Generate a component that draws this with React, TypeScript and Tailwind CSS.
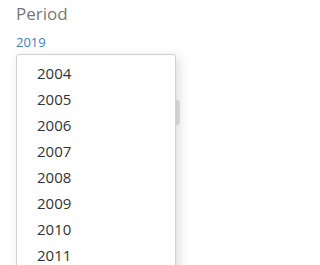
import React from "react";

const YEARS = ["2004", "2005", "2006", "2007", "2008", "2009", "2010", "2011"];

export default function App() {
  return (
    <div
      className="relative h-[265px] w-[220px] overflow-hidden bg-white"
      style={{ fontFamily: '"Open Sans", "Noto Sans", sans-serif' }}
    >
      {/* underlying filter panel */}
      <div className="pl-4 pt-[1px]">
        <div className="text-[17px] leading-[26px] text-[#777]">Period</div>
        <div className="mt-[6px] text-[13px] leading-[18px] text-[#3a7fc8]">2019</div>
        <div className="mt-[24px] h-[1px] w-[8px] bg-[#c97a3a]" />
        <div className="mt-[24px] flex">
          <div className="ml-[140px] h-[25px] w-[24px] rounded-[3px] bg-[#e4e4e4]" />
        </div>
        <div className="mt-[36px] h-[1px] w-[6px] bg-[#c9a07a]" />
      </div>

      {/* open year list */}
      <div className="absolute left-[16px] top-[54px] w-[160px] rounded-[3px] border border-[#d0d0d0] bg-white pt-[5px] pb-[6px] shadow-[3px_3px_12px_rgba(0,0,0,0.14)]">
        {YEARS.map((y) => (
          <div key={y} className="h-[26px] pl-5 text-[15px] leading-[26px] text-[#333]">
            {y}
          </div>
        ))}
      </div>
    </div>
  );
}
